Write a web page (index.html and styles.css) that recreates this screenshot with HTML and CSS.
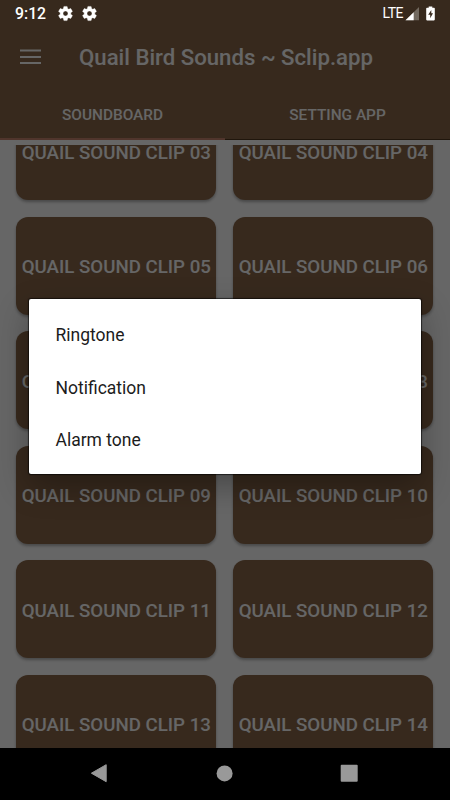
FILE: index.html
```
<!DOCTYPE html>
<html lang="en">
<head>
  <meta charset="UTF-8">
  <title>Quail Bird Sounds ~ Sclip.app</title>
  <meta name="viewport" content="width=device-width, initial-scale=1.0">
  <link rel="stylesheet" href="styles.css">
</head>
<body>
  <div class="app">
    <header class="appbar">
      <div class="toolbar">
        <svg class="menu" width="22" height="16" viewBox="0 0 22 16"><path d="M0 1.5h21M0 8h21M0 14h21" stroke="#fff" stroke-width="2"/></svg>
        <h1 class="title">Quail Bird Sounds ~ Sclip.app</h1>
      </div>
      <nav class="tabs">
        <div class="tab active">SOUNDBOARD</div>
        <div class="tab">SETTING APP</div>
      </nav>
    </header>
    <main class="content">
      <div class="grid">
        <button class="clip">QUAIL SOUND CLIP 03</button>
        <button class="clip">QUAIL SOUND CLIP 04</button>
        <button class="clip">QUAIL SOUND CLIP 05</button>
        <button class="clip">QUAIL SOUND CLIP 06</button>
        <button class="clip">QUAIL SOUND CLIP 07</button>
        <button class="clip">QUAIL SOUND CLIP 08</button>
        <button class="clip">QUAIL SOUND CLIP 09</button>
        <button class="clip">QUAIL SOUND CLIP 10</button>
        <button class="clip">QUAIL SOUND CLIP 11</button>
        <button class="clip">QUAIL SOUND CLIP 12</button>
        <button class="clip">QUAIL SOUND CLIP 13</button>
        <button class="clip">QUAIL SOUND CLIP 14</button>
      </div>
    </main>
    <footer class="navbar">
      <svg width="18" height="20" viewBox="0 0 18 20"><path d="M1.4 10.2 16.2 1.7v17z" fill="#999" stroke="#999" stroke-linejoin="round"/></svg>
      <svg width="18" height="18" viewBox="0 0 18 18"><circle cx="9.6" cy="9.4" r="8" fill="#999"/></svg>
      <svg width="18" height="18" viewBox="0 0 18 18"><rect x=".7" y=".8" width="17" height="17" rx="1" fill="#999"/></svg>
    </footer>
  </div>

  <div class="scrim">
    <div class="dialog">
      <div class="option">Ringtone</div>
      <div class="option">Notification</div>
      <div class="option">Alarm tone</div>
    </div>
  </div>

  <div class="statusbar">
    <span class="clock">9:12</span>
    <svg class="gear" width="17" height="17" viewBox="0 0 24 24"><use href="#gear"/></svg>
    <svg class="gear" width="17" height="17" viewBox="0 0 24 24">
      <path id="gear" fill="#fff" stroke="#fff" stroke-width=".5" d="M19.43 12.98c.04-.32.07-.64.07-.98s-.03-.66-.07-.98l2.11-1.65c.19-.15.24-.42.12-.64l-2-3.46c-.12-.22-.39-.3-.61-.22l-2.49 1c-.52-.4-1.08-.73-1.69-.98l-.38-2.65C14.46 2.18 14.25 2 14 2h-4c-.25 0-.46.18-.49.42l-.38 2.65c-.61.25-1.17.59-1.69.98l-2.49-1c-.23-.09-.49 0-.61.22l-2 3.46c-.13.22-.07.49.12.64l2.11 1.65c-.04.32-.07.65-.07.98s.03.66.07.98l-2.11 1.65c-.19.15-.24.42-.12.64l2 3.46c.12.22.39.3.61.22l2.49-1c.52.4 1.08.73 1.69.98l.38 2.65c.03.24.24.42.49.42h4c.25 0 .46-.18.49-.42l.38-2.65c.61-.25 1.17-.59 1.69-.98l2.49 1c.23.09.49 0 .61-.22l2-3.46c.12-.22.07-.49-.12-.64l-2.11-1.65zM12 15.5c-1.93 0-3.5-1.57-3.5-3.5s1.57-3.5 3.5-3.5 3.5 1.57 3.5 3.5-1.57 3.5-3.5 3.5z"/>
    </svg>
    <span class="lte">LTE</span>
    <svg class="signal" width="14" height="14" viewBox="0 0 14 14">
      <path d="M14 0v13.3H.5z" fill="#72695f"/>
      <path d="M8.7 5.2v8.1H.5z" fill="#fff"/>
    </svg>
    <svg class="battery" width="9" height="15" viewBox="0 0 9 15">
      <path d="M2.7.4h3.6v1.4H8q.8 0 .8.8v11q0 .8-.8.8H1q-.8 0-.8-.8v-11q0-.8.8-.8h1.7z" fill="#fff"/>
      <path d="M5.3 4 2.2 8.8h2v3.4l2.8-5H5.3z" fill="#37291d"/>
    </svg>
  </div>
</body>
</html>
```
FILE: styles.css
```
* { box-sizing: border-box; }
body {
  margin: 0; width: 450px; height: 800px; overflow: hidden;
  position: relative; background: #fff;
  font-family: Roboto, sans-serif;
}
svg { display: block; }

.app { height: 800px; display: flex; flex-direction: column; }
.appbar { height: 140px; padding-top: 26px; background: #8a6749; color: #fff; }
.toolbar { display: flex; align-items: center; height: 62px; padding-left: 20px; }
.menu { margin-right: 37px; }
.title { margin: 0; font-size: 22.2px; font-weight: 500; white-space: nowrap; }
.tabs { display: flex; height: 52px; }
.tab {
  flex: 1; display: flex; align-items: center; justify-content: center;
  font-size: 15.4px; font-weight: 500; padding-top: 2px;
  border-bottom: 1px solid #50381f;
}
.tab.active { padding-top: 3px; border-bottom: 2px solid #c9866e; }

.content { flex: 1; min-height: 0; margin-top: 5px; overflow: hidden; }
.grid {
  display: grid; grid-template-columns: 200px 200px; grid-auto-rows: 98px;
  gap: 16.5px 17px; padding-left: 16.3px; margin-top: -42.6px;
}
.clip {
  border: none; border-radius: 12px; padding: 3px 0 0;
  background: #8a6749; color: #fff; white-space: nowrap;
  font-family: inherit; font-size: 18.7px; font-weight: 500;
  box-shadow: 0 2px 3px rgba(0,0,0,0.3);
}

.navbar {
  position: relative; z-index: 2; height: 52.5px; background: #000;
  display: flex; justify-content: space-between; align-items: center;
  padding: 0 92px 1px 90px;
}

.scrim {
  position: absolute; inset: 0; background: rgba(0,0,0,0.6);
  display: flex; align-items: flex-start; justify-content: center; padding-top: 299px;
}
.dialog {
  width: 392px; height: 175px; padding: 9px 0; background: #fff; border-radius: 2px;
  box-shadow: 0 0 1px 1px rgba(0,0,0,0.6), 0 12px 32px rgba(0,0,0,0.3);
}
.option { height: 52.5px; line-height: 54px; padding-left: 26.5px; font-size: 17.5px; color: #1c1c1c; }

.statusbar {
  position: absolute; top: 0; left: 0; width: 450px; height: 27px;
  display: flex; align-items: center; color: #fff; padding: 0 15px;
}
.clock { width: 42px; font-size: 15.8px; font-weight: 500; }
.gear { margin-right: 7px; }
.lte { position: relative; top: -0.5px; margin-left: auto; font-size: 14px; letter-spacing: -0.5px; }
.signal { margin: 0 7px 0 2px; }
```
